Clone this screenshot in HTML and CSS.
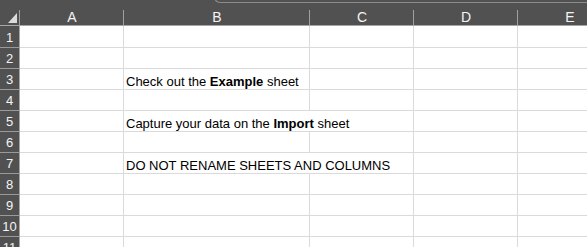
FILE: index.html
```html
<!DOCTYPE html>
<html>
<head>
<meta charset="utf-8">
<link rel="stylesheet" href="styles.css">
</head>
<body>
<div class="sheet">
  <div class="tab-edge"></div>
  <div class="grid">
    <div class="corner"><span class="tri"></span></div>
    <div class="colhead">A</div>
    <div class="colhead">B</div>
    <div class="colhead">C</div>
    <div class="colhead">D</div>
    <div class="colhead">E</div>

    <div class="rowhead first">1</div><div class="cell first"></div><div class="cell first"></div><div class="cell first"></div><div class="cell first"></div><div class="cell first"></div>
    <div class="rowhead">2</div><div class="cell"></div><div class="cell"></div><div class="cell"></div><div class="cell"></div><div class="cell"></div>
    <div class="rowhead">3</div><div class="cell"></div><div class="cell text"><span>Check out the <b>Example</b> sheet</span></div><div class="cell"></div><div class="cell"></div><div class="cell"></div>
    <div class="rowhead">4</div><div class="cell"></div><div class="cell"></div><div class="cell"></div><div class="cell"></div><div class="cell"></div>
    <div class="rowhead">5</div><div class="cell"></div><div class="cell text span2"><span>Capture your data on the <b>Import</b> sheet</span></div><div class="cell"></div><div class="cell"></div>
    <div class="rowhead">6</div><div class="cell"></div><div class="cell"></div><div class="cell"></div><div class="cell"></div><div class="cell"></div>
    <div class="rowhead">7</div><div class="cell"></div><div class="cell text span2"><span>DO NOT RENAME SHEETS AND COLUMNS</span></div><div class="cell"></div><div class="cell"></div>
    <div class="rowhead">8</div><div class="cell"></div><div class="cell"></div><div class="cell"></div><div class="cell"></div><div class="cell"></div>
    <div class="rowhead">9</div><div class="cell"></div><div class="cell"></div><div class="cell"></div><div class="cell"></div><div class="cell"></div>
    <div class="rowhead">10</div><div class="cell"></div><div class="cell"></div><div class="cell"></div><div class="cell"></div><div class="cell"></div>
    <div class="rowhead">11</div><div class="cell"></div><div class="cell"></div><div class="cell"></div><div class="cell"></div><div class="cell"></div>
  </div>
</div>
</body>
</html>
```

FILE: styles.css
```css
html, body {
  margin: 0;
  padding: 0;
  background: #ffffff;
  overflow: hidden;
}

.sheet {
  position: relative;
  width: 587px;
  height: 247px;
  overflow: hidden;
  font-family: "Liberation Sans", Arial, sans-serif;
}

.tab-edge {
  position: absolute;
  top: -10px;
  left: 214px;
  right: -10px;
  height: 12px;
  border-left: 1px solid #8c8c8c;
  border-bottom: 1px solid #8c8c8c;
  border-bottom-left-radius: 6px;
}

.grid {
  display: grid;
  grid-template-columns: 20px 104px 186px 104px 104px 104px;
  grid-template-rows: 26px 22px repeat(10, 21px);
}

.corner,
.colhead {
  background-color: #515151;
  border-bottom: 1px solid #a6a6a6;
  box-sizing: border-box;
}

.corner {
  background-image: linear-gradient(#a0a0a0, #a0a0a0), linear-gradient(#000, #000);
  background-size: 1px 15px, 1px 1px;
  background-position: right bottom, right 10px;
  background-repeat: no-repeat;
  display: flex;
  align-items: flex-end;
  justify-content: flex-end;
  padding: 0 3px 2px 0;
}

.tri {
  width: 0;
  height: 0;
  border-left: 9px solid transparent;
  border-bottom: 10px solid #dcdcdc;
}

.colhead {
  color: #f4f4f4;
  font-size: 14px;
  line-height: 16px;
  display: flex;
  align-items: flex-end;
  justify-content: center;
  background-image: linear-gradient(#a0a0a0, #a0a0a0);
  background-size: 1px 15px;
  background-position: right bottom;
  background-repeat: no-repeat;
}

.rowhead {
  background: #515151;
  color: #f4f4f4;
  font-size: 13px;
  line-height: 15px;
  border-right: 1px solid #a6a6a6;
  border-bottom: 1px solid #9a9a9a;
  box-sizing: border-box;
  display: flex;
  align-items: flex-end;
  justify-content: center;
  padding-bottom: 2px;
}

.cell {
  border-right: 1px solid #dadada;
  border-bottom: 1px solid #dadada;
  box-sizing: border-box;
}

.text {
  color: #000000;
  font-size: 13px;
  line-height: 15px;
  white-space: nowrap;
  display: flex;
  align-items: flex-end;
  padding: 0 0 0 2px;
}

.text b {
  font-weight: bold;
}

.span2 {
  grid-column: span 2;
}
```
